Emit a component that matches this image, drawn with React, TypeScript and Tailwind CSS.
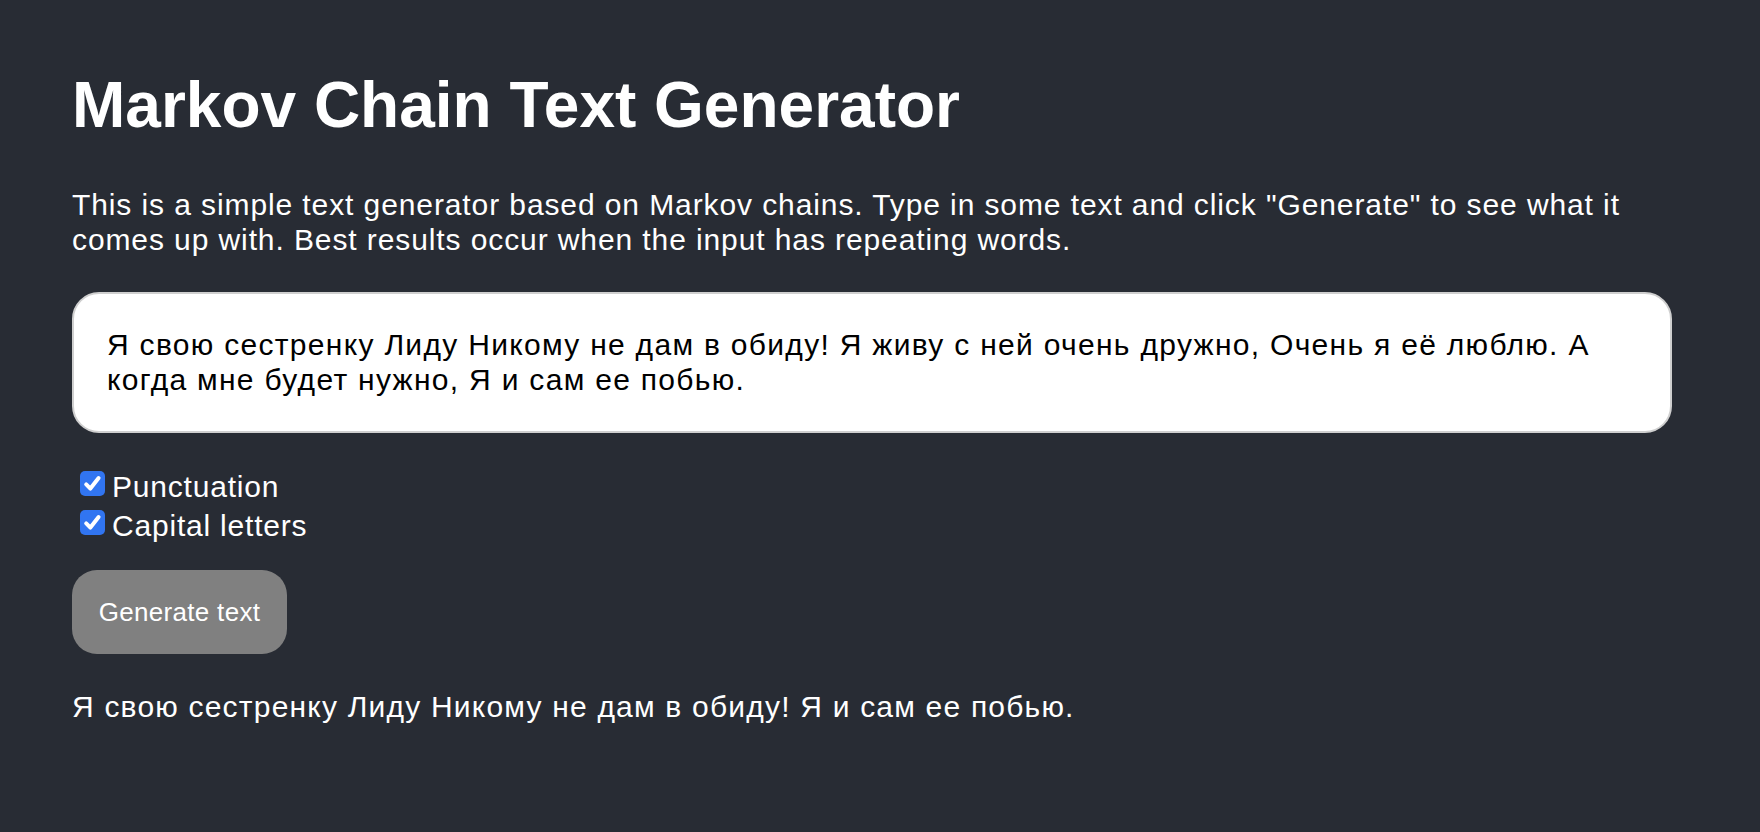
import React, { useState } from "react";

const sample =
  "Я свою сестренку Лиду Никому не дам в обиду! Я живу с ней очень дружно, Очень я её люблю. А когда мне будет нужно, Я и сам ее побью.";

interface OptionProps {
  label: string;
  checked: boolean;
  onToggle: () => void;
}

const Option: React.FC<OptionProps> = ({ label, checked, onToggle }) => (
  <label className="flex h-[39px] items-start cursor-pointer select-none" onClick={onToggle}>
    <span
      className={`mt-[4px] ml-[8px] mr-[7px] flex h-[25px] w-[25px] items-center justify-center rounded-[5px] ${
        checked ? "bg-[#3175f1]" : "bg-white border border-gray-400"
      }`}
    >
      {checked && (
        <svg width="21" height="21" viewBox="0 0 20 20">
          <path
            d="M4 10.8 L8 14.8 L15.8 4.8"
            fill="none"
            stroke="white"
            strokeWidth="3.8"
            strokeLinecap="round"
            strokeLinejoin="round"
          />
        </svg>
      )}
    </span>
    <span className="leading-[39px] tracking-[0.8px]">{label}</span>
  </label>
);

const App: React.FC = () => {
  const [input, setInput] = useState<string>(sample);
  const [punctuation, setPunctuation] = useState<boolean>(true);
  const [capitals, setCapitals] = useState<boolean>(true);
  const [output] = useState<string>(
    "Я свою сестренку Лиду Никому не дам в обиду! Я и сам ее побью."
  );

  return (
    <div className="min-h-[832px] w-full bg-[#282c34] text-white font-['Liberation_Sans',Arial,sans-serif]">
      <div className="ml-[72px] w-[1600px] pt-[68px] pb-10">
        <h1 className="text-[64px] leading-[74px] font-bold">Markov Chain Text Generator</h1>

        <p className="mt-[45px] text-[30px] leading-[35px] tracking-[0.9px]">
          This is a simple text generator based on Markov chains. Type in some text and click
          "Generate" to see what it comes up with. Best results occur when the input has repeating
          words.
        </p>

        <textarea
          className="mt-[35px] block h-[141px] w-full resize-none rounded-[27px] border-2 border-[#cfcfcf] bg-white px-[33px] pt-[33px] pb-[34px] text-[30px] leading-[35px] tracking-[1.3px] text-black outline-none"
          value={input}
          onChange={(e) => setInput(e.target.value)}
        />

        <div className="mt-[34px] text-[30px]">
          <Option label="Punctuation" checked={punctuation} onToggle={() => setPunctuation(!punctuation)} />
          <Option label="Capital letters" checked={capitals} onToggle={() => setCapitals(!capitals)} />
        </div>

        <button
          type="button"
          className="mt-[25px] h-[84px] w-[215px] rounded-[25px] bg-[#808080] text-[26px] tracking-[0.3px] text-white"
        >
          Generate text
        </button>

        <p className="mt-[35px] text-[30px] leading-[35px] tracking-[1.2px]">{output}</p>
      </div>
    </div>
  );
};

export default App;
